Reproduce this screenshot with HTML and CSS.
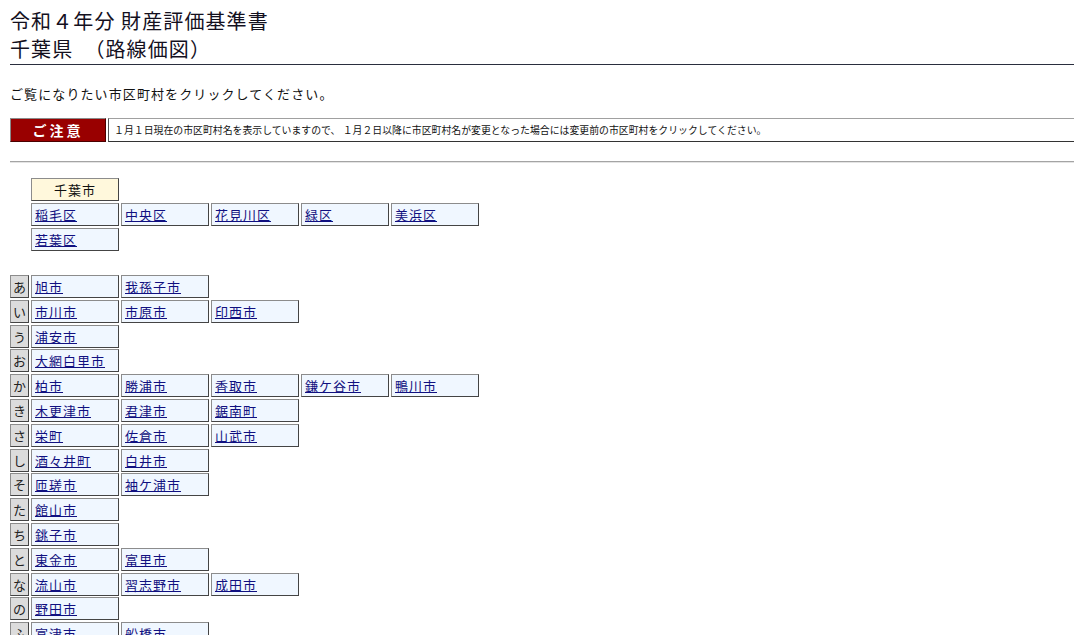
FILE: index.html
```html
<!DOCTYPE html>
<html lang="ja">
<head>
<meta charset="utf-8">
<title>令和４年分 財産評価基準書 千葉県（路線価図）</title>
<link rel="stylesheet" href="styles.css">
</head>
<body>
<div class="page">
  <header class="title">
    <div class="title-line">令和４年分 財産評価基準書</div>
    <div class="title-line">千葉県　（路線価図）</div>
  </header>

  <p class="lead">ご覧になりたい市区町村をクリックしてください。</p>

  <div class="notice">
    <div class="notice-label">ご注意</div>
    <div class="notice-text">１月１日現在の市区町村名を表示していますので、 １月２日以降に市区町村名が変更となった場合には変更前の市区町村をクリックしてください。</div>
  </div>

  <div class="rule"></div>

  <div class="table city-table">
    <div class="row">
      <div class="kana-spacer"></div>
      <div class="cell head">千葉市</div>
    </div>
    <div class="row">
      <div class="kana-spacer"></div>
      <div class="cell"><a href="#">稲毛区</a></div>
      <div class="cell"><a href="#">中央区</a></div>
      <div class="cell"><a href="#">花見川区</a></div>
      <div class="cell"><a href="#">緑区</a></div>
      <div class="cell"><a href="#">美浜区</a></div>
    </div>
    <div class="row">
      <div class="kana-spacer"></div>
      <div class="cell"><a href="#">若葉区</a></div>
    </div>
  </div>

  <div class="table kana-table">
    <div class="row"><div class="kana">あ</div><div class="cell"><a href="#">旭市</a></div><div class="cell"><a href="#">我孫子市</a></div></div>
    <div class="row"><div class="kana">い</div><div class="cell"><a href="#">市川市</a></div><div class="cell"><a href="#">市原市</a></div><div class="cell"><a href="#">印西市</a></div></div>
    <div class="row"><div class="kana">う</div><div class="cell"><a href="#">浦安市</a></div></div>
    <div class="row"><div class="kana">お</div><div class="cell"><a href="#">大網白里市</a></div></div>
    <div class="row"><div class="kana">か</div><div class="cell"><a href="#">柏市</a></div><div class="cell"><a href="#">勝浦市</a></div><div class="cell"><a href="#">香取市</a></div><div class="cell"><a href="#">鎌ケ谷市</a></div><div class="cell"><a href="#">鴨川市</a></div></div>
    <div class="row"><div class="kana">き</div><div class="cell"><a href="#">木更津市</a></div><div class="cell"><a href="#">君津市</a></div><div class="cell"><a href="#">鋸南町</a></div></div>
    <div class="row"><div class="kana">さ</div><div class="cell"><a href="#">栄町</a></div><div class="cell"><a href="#">佐倉市</a></div><div class="cell"><a href="#">山武市</a></div></div>
    <div class="row"><div class="kana">し</div><div class="cell"><a href="#">酒々井町</a></div><div class="cell"><a href="#">白井市</a></div></div>
    <div class="row"><div class="kana">そ</div><div class="cell"><a href="#">匝瑳市</a></div><div class="cell"><a href="#">袖ケ浦市</a></div></div>
    <div class="row"><div class="kana">た</div><div class="cell"><a href="#">館山市</a></div></div>
    <div class="row"><div class="kana">ち</div><div class="cell"><a href="#">銚子市</a></div></div>
    <div class="row"><div class="kana">と</div><div class="cell"><a href="#">東金市</a></div><div class="cell"><a href="#">富里市</a></div></div>
    <div class="row"><div class="kana">な</div><div class="cell"><a href="#">流山市</a></div><div class="cell"><a href="#">習志野市</a></div><div class="cell"><a href="#">成田市</a></div></div>
    <div class="row"><div class="kana">の</div><div class="cell"><a href="#">野田市</a></div></div>
    <div class="row"><div class="kana">ふ</div><div class="cell"><a href="#">富津市</a></div><div class="cell"><a href="#">船橋市</a></div></div>
  </div>
</div>
</body>
</html>
```

FILE: styles.css
```css
html, body {
  margin: 0;
  padding: 0;
  background: #ffffff;
}

body {
  font-family: "Noto Sans CJK JP", "Noto Sans", sans-serif;
  color: #222222;
}

.page {
  padding-left: 10px;
}

.title {
  padding-top: 7px;
  padding-bottom: 1px;
  border-bottom: 1px solid #2a2e3e;
}

.title-line {
  font-size: 20px;
  font-weight: normal;
  line-height: 28px;
  letter-spacing: 1.1px;
  color: #14101e;
}

.lead {
  margin: 19px 0 0 0;
  font-size: 13px;
  line-height: 20px;
  letter-spacing: 1.1px;
  color: #111111;
}

.notice {
  display: flex;
  gap: 2px;
  margin-top: 14px;
  height: 24px;
}

.notice-label {
  box-sizing: border-box;
  width: 96px;
  height: 24px;
  background: #990000;
  border: 1px solid;
  border-color: #8a8a8a #4a0000 #4a0000 #8a8a8a;
  color: #ffffff;
  font-weight: bold;
  font-size: 14px;
  line-height: 22px;
  letter-spacing: 3px;
  text-align: center;
}

.notice-text {
  box-sizing: border-box;
  flex: 1;
  height: 24px;
  border-top: 1px solid #a0a0a0;
  border-left: 1px solid #555555;
  border-bottom: 1px solid #333333;
  padding-left: 5px;
  font-size: 9.9px;
  line-height: 22px;
  color: #111111;
  white-space: nowrap;
  overflow: hidden;
}

.rule {
  margin-top: 19px;
  border-top: 1px solid #a4a4a4;
  border-bottom: 1px solid #e4e4e4;
}

.table {
  display: flex;
  flex-direction: column;
  gap: 2px;
}

.city-table {
  margin-top: 15px;
}

.kana-table {
  margin-top: 24px;
  gap: 1.8px;
}

.row {
  display: flex;
  gap: 2px;
}

.kana-spacer {
  width: 19px;
  flex: none;
}

.kana {
  box-sizing: border-box;
  width: 19px;
  height: 23px;
  flex: none;
  background: #dcdcdc;
  border: 1px solid;
  border-color: #8c8c8c #444444 #444444 #8c8c8c;
  font-size: 13px;
  line-height: 21px;
  text-align: center;
  color: #222222;
}

.cell {
  box-sizing: border-box;
  width: 88px;
  height: 23px;
  flex: none;
  background: #f0f7ff;
  border: 1px solid;
  border-color: #8c8c8c #444444 #444444 #8c8c8c;
  padding-left: 3px;
  font-size: 13px;
  line-height: 21px;
  letter-spacing: 1px;
  white-space: nowrap;
}

.cell.head {
  background: #fff8dc;
  text-align: center;
  padding-left: 0;
  color: #111111;
}

.cell a {
  color: #101080;
  text-decoration: underline;
}
```
